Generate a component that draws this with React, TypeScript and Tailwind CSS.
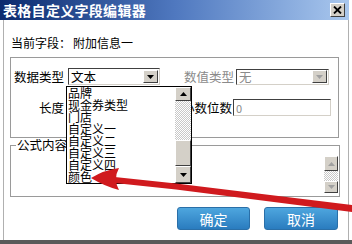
import React from 'react';

const font = { fontFamily: '"Noto Sans CJK SC", "Noto Sans", sans-serif' };

const listItems = ['品牌', '现金券类型', '门店', '自定义一', '自定义二', '自定义三', '自定义四', '颜色'];

function Arrow({ dir, disabled }: { dir: 'up' | 'down'; disabled?: boolean }) {
  const fill = disabled ? '#a0a0a0' : '#000';
  return (
    <svg width="7" height="4" viewBox="0 0 7 4">
      {dir === 'up' ? <polygon points="0,4 7,4 3.5,0" fill={fill} /> : <polygon points="0,0 7,0 3.5,4" fill={fill} />}
    </svg>
  );
}

function ScrollButton({ dir, disabled, className }: { dir: 'up' | 'down'; disabled?: boolean; className: string }) {
  return (
    <div
      className={`flex items-center justify-center bg-[#d4d0c8] border border-t-white border-l-white border-r-[#404040] border-b-[#404040] ${className}`}
    >
      <Arrow dir={dir} disabled={disabled} />
    </div>
  );
}

function Select({ value, disabled, className }: { value: string; disabled?: boolean; className: string }) {
  return (
    <div
      className={`flex items-center bg-white border border-t-[#404040] border-l-[#404040] border-r-[#d4d0c8] border-b-[#d4d0c8] ${className}`}
    >
      <span className={`flex-1 pl-[2px] text-[12.5px] leading-[14px] ${disabled ? 'text-[#8a8a8a]' : 'text-black'}`}>
        {value}
      </span>
      <ScrollButton dir="down" disabled={disabled} className="w-[15px] h-[13px] mr-[1px]" />
    </div>
  );
}

export default function App() {
  return (
    <div className="relative w-[352px] h-[244px] bg-white overflow-hidden flex flex-col" style={font}>
      {/* Title bar */}
      <div className="h-[20px] mr-[3px] flex items-center justify-between bg-gradient-to-r from-[#0c2a6e] via-[#4f78bf] to-[#aac8ee]">
        <span className="pl-[3px] text-[14px] leading-[16px] font-bold text-white tracking-[0.3px]">表格自定义字段编辑器</span>
        <div className="mr-[4px] w-[15px] h-[14px] flex items-center justify-center bg-[#d4d0c8] border border-t-white border-l-white border-r-[#404040] border-b-[#404040]">
          <svg width="9" height="8" viewBox="0 0 9 8">
            <path d="M1 0.5 L8 7.5 M8 0.5 L1 7.5" stroke="#000" strokeWidth="1.8" />
          </svg>
        </div>
      </div>

      <div className="flex-1 flex flex-col ml-[3px] mr-[3px] border-l border-r border-[#b0b0b0]">
        <div className="mt-[14px] ml-[7px] h-[18px] flex items-center text-[12px] text-black">
          <span>当前字段：</span>
          <span className="ml-[2px]">附加信息一</span>
        </div>

        {/* Group 1 */}
        <div className="mt-[5px] ml-[6px] w-[329px] h-[81px] border border-[#9a9a9a] pt-[10px] pl-[1px]">
          <div className="flex items-center h-[17px]">
            <span className="w-[52px] text-right text-[12.5px] leading-[14px]">数据类型</span>
            <Select value="文本" className="ml-[4px] w-[92px] h-[17px]" />
            <span className="w-[74px] text-right text-[12.5px] leading-[14px] text-[#8a8a8a]">数值类型</span>
            <Select value="无" disabled className="ml-[2px] w-[93px] h-[16px]" />
          </div>
          <div className="flex items-center h-[17px] mt-[14px]">
            <span className="w-[52px] text-right text-[12.5px] leading-[14px]">长度</span>
            <div className="ml-[4px] w-[92px] h-[17px] bg-white border border-t-[#404040] border-l-[#404040] border-r-[#d4d0c8] border-b-[#d4d0c8]" />
            <span className="w-[72px] text-right text-[12.5px] leading-[14px]">小数位数</span>
            <div className="ml-[1px] w-[98px] h-[17px] flex items-center bg-white border border-t-[#404040] border-l-[#404040] border-r-[#d4d0c8] border-b-[#d4d0c8]">
              <span className="pl-[2px] text-[11px] leading-[12px] text-[#8a8a8a]">0</span>
            </div>
          </div>
        </div>

        {/* Group 2 */}
        <fieldset className="ml-[6px] w-[330px] h-[59px] border border-[#9a9a9a] px-0 pb-[3px] flex">
          <legend className="ml-[5px] px-[1px] text-[12.5px] leading-[14px]">公式内容</legend>
          <div className="flex-1" />
          <div className="mt-[4px] mr-[1px] w-[14px] flex flex-col">
            <ScrollButton dir="up" disabled className="h-[15px]" />
            <div className="h-[10px] bg-[repeating-conic-gradient(#c8c8c8_0_25%,#ffffff_0_50%)] bg-[length:2px_2px]" />
            <ScrollButton dir="down" disabled className="h-[12px]" />
          </div>
        </fieldset>

        {/* Buttons */}
        <div className="mt-[10px] flex justify-end gap-[14px] mr-[10px]">
          <button className="w-[73px] h-[23px] rounded-[3px] bg-gradient-to-b from-[#4ea6de] to-[#2a7cbf] text-white text-[14px] leading-[16px] border border-[#2a6fa8]">
            确定
          </button>
          <button className="w-[74px] h-[23px] rounded-[3px] bg-gradient-to-b from-[#4ea6de] to-[#2a7cbf] text-white text-[14px] leading-[16px] border border-[#2a6fa8]">
            取消
          </button>
        </div>
        <div className="flex-1" />
      </div>
      <div className="h-[4px] bg-[#5a5a5a]" />

      {/* Open dropdown list */}
      <div className="absolute left-[66px] top-[86px] w-[126px] h-[98px] bg-white border border-black flex">
        <div className="flex-1 flex flex-col pl-[1px]">
          {listItems.map((item) => (
            <div key={item} className="h-[12px] text-[12px] leading-[12px] text-black whitespace-nowrap">
              {item}
            </div>
          ))}
        </div>
        <div className="w-[16px] flex flex-col">
          <ScrollButton dir="up" className="h-[14px]" />
          <div className="h-[39px] bg-[repeating-conic-gradient(#c8c8c8_0_25%,#ffffff_0_50%)] bg-[length:2px_2px]" />
          <div className="h-[26px] bg-[#d4d0c8] border border-t-white border-l-white border-r-[#404040] border-b-[#404040]" />
          <ScrollButton dir="down" className="h-[17px]" />
        </div>
      </div>

      {/* Red annotation arrow */}
      <svg className="absolute inset-0 pointer-events-none" width="352" height="244" viewBox="0 0 352 244">
        <polygon points="110,176.5 176,183.5 352,205 352,212 176,189.5 110,182.5" fill="#d01a1e" />
        <path d="M91,178 Q104,170 119,168 Q113,179 119,190 Q104,186 91,178 Z" fill="#d01a1e" />
      </svg>
    </div>
  );
}
